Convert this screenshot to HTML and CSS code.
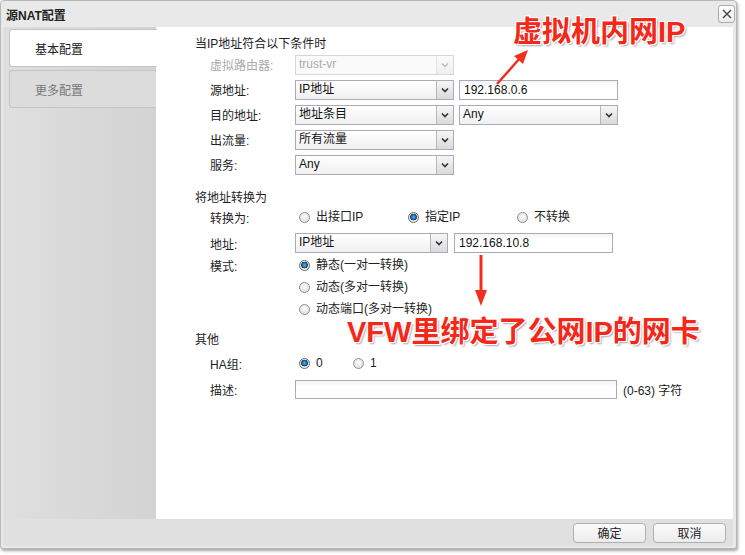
FILE: index.html
```html
<!DOCTYPE html>
<html lang="zh">
<head>
<meta charset="utf-8">
<link rel="stylesheet" href="styles.css">
</head>
<body>
<div class="window">
  <div class="titlebar">
    <span class="title">源NAT配置</span>
    <span class="close"><svg width="10" height="10" viewBox="0 0 10 10"><path d="M1 1L9 9M9 1L1 9" stroke="#444" stroke-width="1.4"/></svg></span>
  </div>
  <div class="main">
    <div class="nav">
      <div class="tab active">基本配置</div>
      <div class="tab">更多配置</div>
    </div>
    <div class="content">
      <div class="heading">当IP地址符合以下条件时</div>
      <div class="row">
        <span class="label disabled">虚拟路由器:</span>
        <span class="select disabled w159"><span class="val">trust-vr</span><span class="btn"><svg width="8" height="6" viewBox="0 0 8 6"><path d="M1 1.5L4 4.5L7 1.5" fill="none" stroke="#bbb" stroke-width="1.5"/></svg></span></span>
      </div>
      <div class="row">
        <span class="label">源地址:</span>
        <span class="select w159"><span class="val">IP地址</span><span class="btn"><svg width="8" height="6" viewBox="0 0 8 6"><path d="M1 1.5L4 4.5L7 1.5" fill="none" stroke="#333" stroke-width="1.6"/></svg></span></span>
        <span class="input w159 gap5">192.168.0.6</span>
      </div>
      <div class="row">
        <span class="label">目的地址:</span>
        <span class="select w159"><span class="val">地址条目</span><span class="btn"><svg width="8" height="6" viewBox="0 0 8 6"><path d="M1 1.5L4 4.5L7 1.5" fill="none" stroke="#333" stroke-width="1.6"/></svg></span></span>
        <span class="select w159 gap5"><span class="val">Any</span><span class="btn"><svg width="8" height="6" viewBox="0 0 8 6"><path d="M1 1.5L4 4.5L7 1.5" fill="none" stroke="#333" stroke-width="1.6"/></svg></span></span>
      </div>
      <div class="row">
        <span class="label">出流量:</span>
        <span class="select w159"><span class="val">所有流量</span><span class="btn"><svg width="8" height="6" viewBox="0 0 8 6"><path d="M1 1.5L4 4.5L7 1.5" fill="none" stroke="#333" stroke-width="1.6"/></svg></span></span>
      </div>
      <div class="row">
        <span class="label">服务:</span>
        <span class="select w159"><span class="val">Any</span><span class="btn"><svg width="8" height="6" viewBox="0 0 8 6"><path d="M1 1.5L4 4.5L7 1.5" fill="none" stroke="#333" stroke-width="1.6"/></svg></span></span>
      </div>

      <div class="heading sec2">将地址转换为</div>
      <div class="row r22">
        <span class="label">转换为:</span>
        <span class="opt w109"><span class="radio"></span>出接口IP</span>
        <span class="opt w109"><span class="radio on"></span>指定IP</span>
        <span class="opt"><span class="radio"></span>不转换</span>
      </div>
      <div class="row r22 mt4">
        <span class="label">地址:</span>
        <span class="select w153"><span class="val">IP地址</span><span class="btn"><svg width="8" height="6" viewBox="0 0 8 6"><path d="M1 1.5L4 4.5L7 1.5" fill="none" stroke="#333" stroke-width="1.6"/></svg></span></span>
        <span class="input w159 gap6">192.168.10.8</span>
      </div>
      <div class="row r22">
        <span class="label">模式:</span>
        <span class="opt"><span class="radio on"></span>静态(一对一转换)</span>
      </div>
      <div class="row r22">
        <span class="label"></span>
        <span class="opt"><span class="radio"></span>动态(多对一转换)</span>
      </div>
      <div class="row r22">
        <span class="label"></span>
        <span class="opt"><span class="radio"></span>动态端口(多对一转换)</span>
      </div>

      <div class="heading sec3">其他</div>
      <div class="row r22 mt4">
        <span class="label">HA组:</span>
        <span class="opt w54"><span class="radio on"></span>0</span>
        <span class="opt"><span class="radio"></span>1</span>
      </div>
      <div class="row r24 mt3">
        <span class="label">描述:</span>
        <span class="input w322 h18"></span>
        <span class="hint">(0-63) 字符</span>
      </div>
    </div>
  </div>
  <div class="footer">
    <span class="button">确定</span>
    <span class="button">取消</span>
  </div>
</div>

<div class="note note1">虚拟机内网IP</div>
<div class="note note2">VFW里绑定了公网IP的网卡</div>
<svg class="arrow arrow1" width="40" height="40" viewBox="0 0 40 40">
  <path d="M5 36L28 10" stroke="#f0301c" stroke-width="2.5" fill="none"/>
  <path d="M36 2L22 8L31 16Z" fill="#f0301c"/>
</svg>
<svg class="arrow arrow2" width="20" height="56" viewBox="0 0 20 56">
  <path d="M10 1L10 40" stroke="#f0301c" stroke-width="3" fill="none"/>
  <path d="M4 36L16 36L10 52Z" fill="#f0301c"/>
</svg>
</body>
</html>
```

FILE: styles.css
```css
html, body {
  margin: 0;
  padding: 0;
}
body {
  width: 745px;
  height: 555px;
  background: #ffffff;
  font-family: "Liberation Sans", "Noto Sans CJK SC", sans-serif;
  font-size: 12px;
  color: #222;
  position: relative;
  overflow: hidden;
}
.window {
  width: 737px;
  height: 549px;
  box-sizing: border-box;
  background: #e9e9e9;
  border: 1px solid #b8b8b8;
  border-radius: 4px 4px 3px 3px;
  box-shadow: 1px 2px 3px rgba(0,0,0,0.35);
  padding: 0 3px 2px 2px;
  display: flex;
  flex-direction: column;
}
.titlebar {
  height: 26px;
  display: flex;
  align-items: center;
  justify-content: space-between;
  padding: 0 0 0 3px;
  flex: none;
}
.title {
  font-weight: bold;
  font-size: 12px;
  color: #222;
  margin-top: 1px;
}
.close {
  width: 15px;
  height: 16px;
  border: 1px solid #aaa;
  border-radius: 3px;
  background: linear-gradient(#ffffff, #ececec);
  display: flex;
  align-items: center;
  justify-content: center;
  margin-right: -2px;
  margin-top: -1px;
}
.main {
  flex: 1;
  display: flex;
  min-height: 0;
}
.nav {
  width: 153px;
  flex: none;
  background: linear-gradient(90deg, #dfdfdf, #d3d3d3);
  padding: 2px 0 0 6px;
  box-sizing: border-box;
}
.tab {
  height: 38px;
  box-sizing: border-box;
  border: 1px solid #c4c4c4;
  border-right: none;
  border-radius: 3px 0 0 3px;
  background: #dcdcdc;
  color: #777;
  font-size: 12px;
  display: flex;
  align-items: center;
  padding-left: 25px;
  margin-bottom: 3px;
}
.tab.active {
  background: #ffffff;
  color: #222;
  margin-right: -1px;
  position: relative;
}
.content {
  flex: 1;
  background: #ffffff;
  padding: 10px 0 0 39px;
  box-sizing: border-box;
}
.heading {
  height: 15px;
  line-height: 15px;
  color: #222;
}
.sec2 { margin-top: 14px; }
.sec3 { margin-top: 13px; }
.row {
  height: 25px;
  display: flex;
  align-items: center;
  padding-left: 15px;
}
.r22 { height: 22px; }
.r24 { height: 24px; }
.mt4 { margin-top: 4px; }
.mt3 { margin-top: 3px; }
.label {
  width: 85px;
  flex: none;
  color: #222;
}
.label.disabled { color: #aaa; }
.select {
  height: 20px;
  box-sizing: border-box;
  border: 1px solid #a9abbb;
  background: linear-gradient(#ffffff, #f0f0f0);
  display: flex;
  align-items: stretch;
}
.select .val {
  flex: 1;
  padding-left: 3px;
  line-height: 17px;
  color: #111;
}
.select .btn {
  width: 16px;
  border-left: 1px solid #b6b6c0;
  background: linear-gradient(#f6f6f6, #dadada);
  display: flex;
  align-items: center;
  justify-content: center;
}
.select.disabled {
  border-color: #d6d6d6;
  background: #fafafa;
}
.select.disabled .val { color: #aaa; }
.select.disabled .btn {
  border-left: 1px solid #e2e2e2;
  background: linear-gradient(#fafafa, #efefef);
}
.input {
  height: 20px;
  box-sizing: border-box;
  border: 1px solid #a9abbb;
  background: linear-gradient(#f4f4f4, #ffffff 6px);
  padding-left: 4px;
  line-height: 18px;
  color: #111;
}
.h18 { height: 19px; }
.w159 { width: 159px; }
.w153 { width: 153px; }
.w322 { width: 322px; }
.gap5 { margin-left: 5px; }
.gap6 { margin-left: 6px; }
.opt {
  display: flex;
  align-items: center;
  margin-left: 4px;
  color: #222;
  line-height: 14px;
}
.opt + .opt { margin-left: 0; }
.w109 { width: 109px; }
.w54 { width: 54px; }
.radio {
  width: 11px;
  height: 11px;
  box-sizing: border-box;
  border-radius: 50%;
  border: 1px solid #909090;
  background: radial-gradient(circle at 50% 40%, #fdfdfd, #d6d6d6);
  margin-right: 6px;
  flex: none;
}
.radio.on {
  border-color: #6a6a6a;
  background: radial-gradient(circle at 50% 45%, #5fb0e8 0, #1a6fb0 2.2px, #1b3a5c 3.2px, #e6e6e6 3.6px, #f4f4f4 6px);
}
.hint {
  margin-left: 6px;
  color: #222;
}
.footer {
  height: 27px;
  flex: none;
  background: #e0e0e0;
  display: flex;
  align-items: center;
  justify-content: flex-end;
  gap: 7px;
  padding-right: 7px;
}
.button {
  width: 73px;
  height: 20px;
  box-sizing: border-box;
  border: 1px solid #b0b0b0;
  border-radius: 4px;
  background: linear-gradient(#fbfbfb, #ececec);
  display: flex;
  align-items: center;
  justify-content: center;
  color: #222;
}
.note {
  position: absolute;
  font-family: "Liberation Sans", "Noto Sans CJK SC", sans-serif;
  font-weight: bold;
  font-size: 29px;
  line-height: 34px;
  color: #f3281a;
  white-space: nowrap;
  text-shadow: 1px 0 0 #fff, -1px 0 0 #fff, 0 1px 0 #fff, 0 -1px 0 #fff, 1px 1px 0 #fff, -1px -1px 0 #fff, 1px -1px 0 #fff, -1px 1px 0 #fff, 2px 2px 2px rgba(0,0,0,0.35);
}
.note1 { left: 513px; top: 15px; }
.note2 { left: 347px; top: 318px; line-height: 28px; }
.arrow { position: absolute; }
.arrow1 { left: 492px; top: 48px; }
.arrow2 { left: 471px; top: 254px; }
```
